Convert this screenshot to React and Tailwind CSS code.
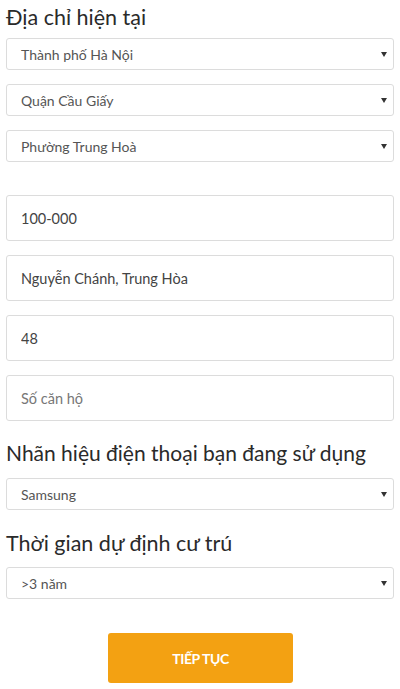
import React from 'react'

const font = { fontFamily: 'Lato, "Noto Sans", sans-serif' }

function Select({ value, className = '' }) {
  return (
    <div className={`h-[32px] flex items-center justify-between pl-[14px] pr-[6px] border border-[#dcdcdc] rounded-[3px] bg-white ${className}`}>
      <span className="text-[14px] text-[#555]">{value}</span>
      <span className="w-0 h-0 border-l-[3px] border-r-[3px] border-t-[5px] border-l-transparent border-r-transparent border-t-[#333]" />
    </div>
  )
}

function Field({ value, placeholder, className = '' }) {
  return (
    <input
      readOnly
      defaultValue={value}
      placeholder={placeholder}
      className={`block w-full h-[46px] px-[14px] border border-[#dcdcdc] rounded-[3px] bg-white text-[14.5px] text-[#444] placeholder:text-[#777] outline-none ${className}`}
    />
  )
}

export default function App() {
  return (
    <div className="w-[400px] h-[689px] bg-white px-[6px] overflow-hidden" style={font}>
      <h2 className="pt-[3px] h-[31px] leading-[28px] text-[21.5px] text-[#2a2a2a] font-normal">Địa chỉ hiện tại</h2>
      <div className="mt-[7px] flex flex-col gap-[14px]">
        <Select value="Thành phố Hà Nội" />
        <Select value="Quận Cầu Giấy" />
        <Select value="Phường Trung Hoà" />
      </div>

      <div className="mt-[33px] flex flex-col gap-[14px]">
        <Field value="100-000" />
        <Field value="Nguyễn Chánh, Trung Hòa" />
        <Field value="48" />
        <Field placeholder="Số căn hộ" />
      </div>

      <h2 className="mt-[18px] h-[28px] leading-[28px] text-[21px] text-[#2a2a2a] font-normal">Nhãn hiệu điện thoại bạn đang sử dụng</h2>
      <Select value="Samsung" className="mt-[11px]" />

      <h2 className="mt-[19px] h-[28px] leading-[28px] text-[21.5px] text-[#2a2a2a] font-normal">Thời gian dự định cư trú</h2>
      <Select value=">3 năm" className="mt-[10px]" />

      <div className="mt-[34px] flex justify-center">
        <button className="w-[185px] h-[50px] ml-[1px] rounded-[3px] bg-[#f3a112] text-white text-[14px] font-bold tracking-[-0.4px]">
          TIẾP TỤC
        </button>
      </div>
    </div>
  )
}
